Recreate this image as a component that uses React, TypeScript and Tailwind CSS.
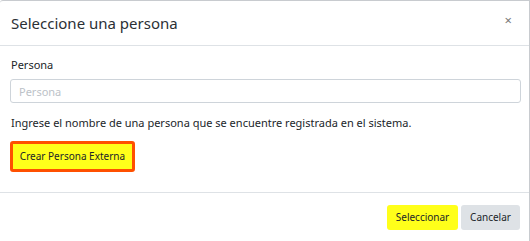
export default function App() {
  return (
    <div className="w-[530px] h-[241px] bg-white overflow-hidden" style={{ fontFamily: '"Noto Sans", "Open Sans", sans-serif' }}>
      <div className="h-full border-r border-t border-[#c8cbcf] rounded-tl-[3px] flex flex-col">
        <div className="h-[45px] border-b border-[#dee2e6] flex items-center justify-between pl-[11px] pr-[17px]">
          <h5 className="text-[15px] text-[#2b3035] leading-none">Seleccione una persona</h5>
          <span className="text-[13px] text-[#777] leading-none mb-[6px]">×</span>
        </div>
        <div className="px-[10px] pt-[12px] h-[147px] border-b border-[#dee2e6]">
          <label className="block text-[11px] text-[#212529] pl-[1px] leading-[14px]">Persona</label>
          <input
            placeholder="Persona"
            className="mt-[7px] block w-[511px] h-[24px] border border-[#ced4da] rounded-[3px] px-[8px] text-[11px] placeholder:text-[#bcc2c8] outline-none"
          />
          <p className="mt-[13px] text-[11px] text-[#212529] pl-[1px] leading-[14px]">
            Ingrese el nombre de una persona que se encuentre registrada en el sistema.
          </p>
          <button className="mt-[11px] h-[31px] w-[125px] bg-[#ffff1a] border-[3px] border-[#ff5000] rounded-[3px] text-[10px] text-[#212529]">
            Crear Persona Externa
          </button>
        </div>
        <div className="flex justify-end gap-[3px] pr-[9px] pt-[12px]">
          <button className="h-[25px] w-[71px] bg-[#ffff1a] rounded-[3px] text-[10px] text-[#212529]">Seleccionar</button>
          <button className="h-[25px] w-[59px] bg-[#dee2e6] rounded-[3px] text-[10px] text-[#212529]">Cancelar</button>
        </div>
      </div>
    </div>
  );
}
